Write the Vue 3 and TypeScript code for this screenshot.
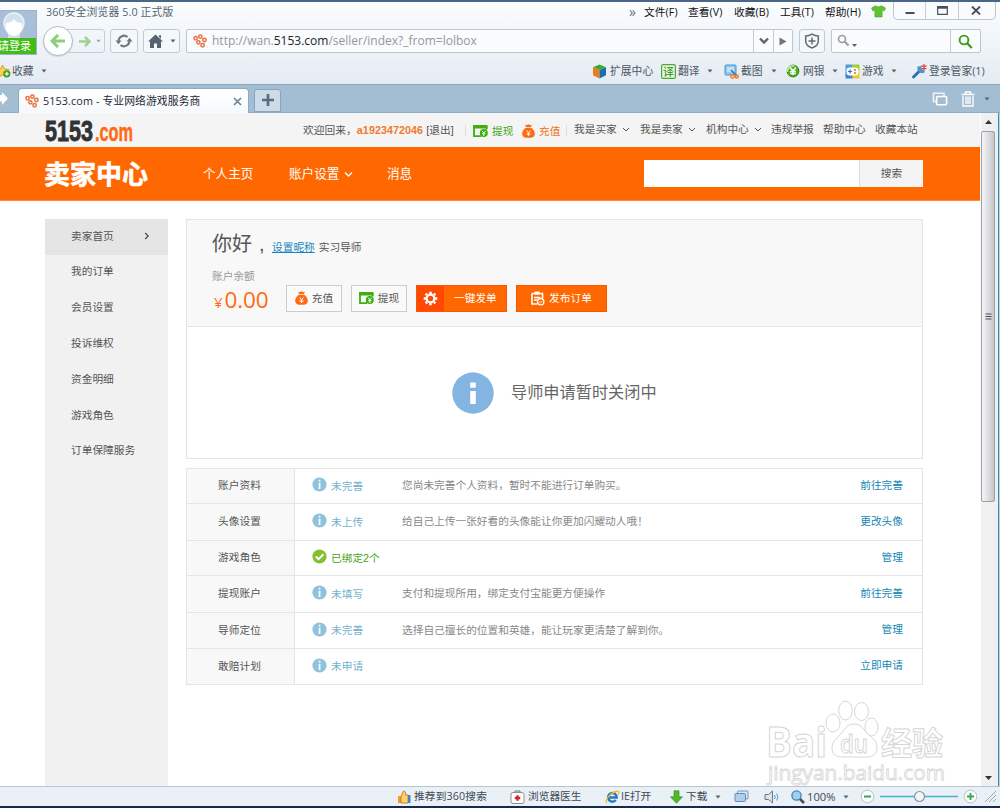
<script setup lang="ts">
interface StatusRow {
  name: string
  state: string
  ok?: boolean
  note: string
  action: string
}

const menus: string[] = ['文件(F)', '查看(V)', '收藏(B)', '工具(T)', '帮助(H)']
const sideItems: string[] = ['卖家首页', '我的订单', '会员设置', '投诉维权', '资金明细', '游戏角色', '订单保障服务']
const rows: StatusRow[] = [
  { name: '账户资料', state: '未完善', note: '您尚未完善个人资料，暂时不能进行订单购买。', action: '前往完善' },
  { name: '头像设置', state: '未上传', note: '给自己上传一张好看的头像能让你更加闪耀动人哦！', action: '更改头像' },
  { name: '游戏角色', state: '已绑定2个', ok: true, note: '', action: '管理' },
  { name: '提现账户', state: '未填写', note: '支付和提现所用，绑定支付宝能更方便操作', action: '前往完善' },
  { name: '导师定位', state: '未完善', note: '选择自己擅长的位置和英雄，能让玩家更清楚了解到你。', action: '管理' },
  { name: '敢赔计划', state: '未申请', note: '', action: '立即申请' },
]
</script>

<template>
  <div class="window">
    <svg class="defs" width="0" height="0" aria-hidden="true">
      <symbol id="flower" viewBox="0 0 14 14">
        <g fill="none" stroke="#e8713f" stroke-width="1.500">
          <circle cx="2.600" cy="4.300" r="1.700" />
          <circle cx="7.400" cy="2.600" r="1.700" />
          <circle cx="11.400" cy="6" r="1.700" />
          <circle cx="5.400" cy="8.300" r="1.600" />
          <circle cx="9.600" cy="11.300" r="1.700" />
        </g>
      </symbol>
      <symbol id="card" viewBox="0 0 15 13">
        <path d="M0 .5h14.500v3.500H0z" fill="#3fae10" />
        <path d="M1 2v9.700h7M13.600 2v3" fill="none" stroke="#3fae10" stroke-width="1.800" />
        <circle cx="10.800" cy="8.600" r="4" fill="#3fae10" />
        <path d="M9 6.300l1.800 2.200 1.800-2.200M10.800 8.500v3M9.200 9.200h3.200" fill="none" stroke="#fff" stroke-width=".9" />
      </symbol>
      <symbol id="bag" viewBox="0 0 13 14">
        <path d="M3.200.6l1.600.6L6.500.3l1.700.9L9.800.6 9 3H4z" fill="#ff6a10" />
        <path d="M4 3.800h5c2 1.200 3.800 3.300 3.800 5.700 0 3-1.800 4.300-4.300 4.300h-4C2 13.800.2 12.500.2 9.500.2 7.100 2 5 4 3.800z" fill="#ff6a10" />
        <path d="M4.500 6.300l2 2.400 2-2.400M6.500 8.700v3.300M4.600 9.100h3.800M4.600 10.600h3.800" fill="none" stroke="#fff" stroke-width=".8" />
      </symbol>
      <symbol id="chev" viewBox="0 0 8 8">
        <path d="M1 3l3 3 3-3" fill="none" stroke="currentColor" />
      </symbol>
      <symbol id="caret" viewBox="0 0 6 4">
        <path d="M.5.5h5L3 3.500z" fill="#56636f" />
      </symbol>
    </svg>

    <header class="browser">
      <div class="account">
        <svg width="36" height="27" viewBox="0 0 36 27">
          <rect width="36" height="27" fill="#a9bfd9" />
          <path d="M4 12C3-2 25-2 24 12c0 5-1 8-4 11v4H8v-4c-3-3-4-6-4-11z" fill="#d4dfec" />
          <circle cx="14" cy="12" r="10" fill="none" stroke="#e9f1f8" stroke-width="1.500" />
          <path d="M6 12c3 0 6-1 8-4 2 3 5 4 8 4 1 8-3 13-8 13S5 20 6 12z" fill="#fff" />
        </svg>
        <span>请登录</span>
      </div>

      <div class="browser-main">
        <div class="title-row">
          <span class="title">360安全浏览器 5.0 正式版</span>
          <span class="more">»</span>
          <span v-for="m in menus" :key="m" class="menu">{{ m }}</span>
          <svg class="shirt" width="15" height="13" viewBox="0 0 15 13">
            <path d="M4.500.8Q7.500 3 10.500.8L14.500 3l-1.400 3-2-.7V12H3.900V5.300l-2 .7L.5 3z" fill="#5fc22f" stroke="#4aa822" stroke-width=".6" />
          </svg>
          <div class="win-buttons">
            <span><svg width="10" height="9" viewBox="0 0 10 9"><path d="M.5 7h9" stroke="#44505e" stroke-width="2" /></svg></span>
            <span><svg width="11" height="9" viewBox="0 0 11 9"><path d="M.7.700h9.600v7.600H.7z" fill="none" stroke="#44505e" stroke-width="1.200" /><path d="M.5 1.700h10" stroke="#44505e" stroke-width="2" /></svg></span>
            <span><svg width="10" height="9" viewBox="0 0 10 9"><path d="M1 .5l8 8M9 .5l-8 8" stroke="#44505e" stroke-width="1.900" /></svg></span>
          </div>
        </div>

        <div class="nav-row">
          <div class="back-fwd">
            <span class="back">
              <svg width="16" height="14" viewBox="0 0 16 14"><path d="M8 1L2 7l6 6M2.500 7H15" fill="none" stroke="#8ccc7c" stroke-width="3" /></svg>
            </span>
            <span class="fwd">
              <svg width="12" height="11" viewBox="0 0 12 11"><path d="M6 1l4.500 4.500L6 10M10 5.500H0" fill="none" stroke="#9bd392" stroke-width="2.500" /></svg>
              <svg width="5" height="4"><use href="#caret" opacity=".6" /></svg>
            </span>
          </div>
          <span class="btn refresh">
            <svg width="18" height="16" viewBox="0 0 18 16">
              <path d="M3.600 8.500A5.400 5.400 0 0 1 12.500 4M14.400 7.500A5.400 5.400 0 0 1 5.500 12" fill="none" stroke="#6a7785" stroke-width="2" />
              <path d="M.5 7.500h6l-3 3.700zM11.500 8.500h6l-3-3.700z" fill="#6a7785" />
            </svg>
          </span>
          <span class="btn home">
            <svg width="15" height="14" viewBox="0 0 15 14"><path d="M7.500.5L15 7.500h-2V14H9V9.500H6V14H2V7.500H0zM11 1.300h2v3.500l-2-2z" fill="#56626f" /></svg>
            <svg width="6" height="4"><use href="#caret" /></svg>
          </span>
          <div class="address">
            <svg width="14" height="14"><use href="#flower" /></svg>
            <span class="url">http://wan.<b>5153.com</b>/seller/index?_from=lolbox</span>
            <i><svg width="12" height="8" viewBox="0 0 12 8"><path d="M2 1.500l4 4 4-4" fill="none" stroke="#5a6673" stroke-width="2.400" /></svg></i>
            <i><svg width="8" height="9" viewBox="0 0 8 9"><path d="M.5.500l7 4-7 4z" fill="#6a7683" /></svg></i>
          </div>
          <span class="btn shield">
            <svg width="16" height="16" viewBox="0 0 16 16"><path d="M8 1.200Q11 3 14.300 3v5c0 3.500-3.500 6-6.300 7-2.800-1-6.300-3.500-6.300-7V3Q5 3 8 1.200z" fill="none" stroke="#5f6c78" stroke-width="1.500" /><path d="M4.500 8h7M8 4.500v7" stroke="#5f6c78" stroke-width="1.500" /></svg>
          </span>
          <div class="search">
            <svg width="22" height="14" viewBox="0 0 22 14"><circle cx="5" cy="5" r="3.500" fill="none" stroke="#97a0aa" stroke-width="1.700" /><path d="M7.500 7.500l4 4" stroke="#97a0aa" stroke-width="2.200" /><path d="M15 10h5l-2.500 3z" fill="#56636f" /></svg>
            <i><svg width="15" height="15" viewBox="0 0 15 15"><circle cx="6" cy="6" r="4.400" fill="none" stroke="#3f9a1c" stroke-width="1.900" /><path d="M9 9l4.800 5" stroke="#3f9a1c" stroke-width="2.300" /></svg></i>
          </div>
        </div>
      </div>

      <div class="bookmarks">
        <svg width="11" height="14" viewBox="0 0 11 14">
          <path d="M2.500 1L4.500 5 9 5.500 6 8.500l1 4.500-4.500-2.200L-1 13V5l2-.5z" fill="#ffd04a" stroke="#d89a2a" />
          <circle cx="6.800" cy="9.800" r="3.600" fill="#3f9b22" /><path d="M4.800 9.800h4M6.800 7.800v4" stroke="#fff" stroke-width="1.300" />
        </svg>
        <span>收藏</span>
        <svg width="6" height="4"><use href="#caret" /></svg>

        <svg width="15" height="15" viewBox="0 0 15 15"><path d="M7.500.5L14 3.200 7.500 6 1 3.200z" fill="#37ad2c" /><path d="M1 3.200L7.500 6v8.500L1 11.300z" fill="#ec7b1c" /><path d="M14 3.200L7.500 6v8.500L14 11.300z" fill="#1d6ab5" /></svg>
        <span>扩展中心</span>
        <svg width="15" height="15" viewBox="0 0 15 15"><rect x=".6" y=".6" width="13.800" height="13.800" rx="1.500" fill="#e6f6dc" stroke="#4fa835" stroke-width="1.200" /><text x="2" y="11.700" font-size="11" fill="#2f8a1c">译</text></svg>
        <span>翻译</span>
        <svg width="6" height="4"><use href="#caret" /></svg>
        <svg width="15" height="15" viewBox="0 0 15 15"><rect x="1" y="1" width="11" height="10" rx="1" fill="#8cc5ee" stroke="#4a93cd" /><rect x="3" y="3" width="7" height="5" fill="#c2e3fa" /><path d="M7 6l6 6" stroke="#336fae" stroke-width="1.500" /><circle cx="8.500" cy="12.500" r="1.700" fill="none" stroke="#ef7e25" stroke-width="1.400" /><circle cx="12.800" cy="12.500" r="1.500" fill="none" stroke="#ef7e25" stroke-width="1.400" /></svg>
        <span>截图</span>
        <svg width="6" height="4"><use href="#caret" /></svg>
        <svg width="14" height="14" viewBox="0 0 14 14"><circle cx="7" cy="7" r="5.900" fill="#54ad25" stroke="#2d8410" /><path d="M1.500 8a5.500 5.500 0 0 1 7-6" fill="none" stroke="#c6eda0" stroke-width="1.500" /><path d="M4 3.500l3 3.300 3-3.300M7 7v4M4.200 7.400h5.600M4.200 9.400h5.600" fill="none" stroke="#fff" stroke-width="1.500" /></svg>
        <span>网银</span>
        <svg width="6" height="4"><use href="#caret" /></svg>
        <svg width="15" height="15" viewBox="0 0 15 15"><path d="M.5.500h7v7h-7z" fill="#4a9edb" /><path d="M7.500.500h7v7h-7z" fill="#a7cc2b" /><path d="M7.500 7.500h7v7h-7z" fill="#f4c62d" /><path d="M.5 7.500h7v7h-7z" fill="#3c84cc" /><rect x="1.500" y="3.500" width="12" height="8" rx="3" fill="#fff" /><path d="M3 7.500h4M5 5.500v4" stroke="#2a74bb" stroke-width="1.200" /><path d="M9 6h2M9 9h2" stroke="#cf732a" stroke-width="1.500" /></svg>
        <span>游戏</span>
        <svg width="6" height="4"><use href="#caret" /></svg>
        <svg class="wrench" width="15" height="15" viewBox="0 0 15 15"><path d="M1.500 13L8 6.500" stroke="#296fae" stroke-width="2.800" stroke-linecap="round" /><path d="M5.500 2.500v4L8.500 9H12L13 6.500 9.500 5V2z" fill="#4f93cc" /><path d="M12 0v6M9.300 1.500l5.400 3M9.300 4.500l5.400-3" stroke="#e5453a" stroke-width="1.300" /></svg>
        <span class="steward">登录管家(1)</span>
      </div>
    </header>

    <div class="tabs">
      <svg width="18" height="24" viewBox="0 0 18 24"><path d="M0 8h2V5l6 6.500L2 18v-3.500H0z" fill="#fff" /></svg>
      <div class="tab">
        <svg width="14" height="14"><use href="#flower" /></svg>
        <span>5153.com - 专业网络游戏服务商</span>
        <svg width="9" height="9" viewBox="0 0 9 9"><path d="M1 1l7 7M8 1L1 8" stroke="#6a8198" stroke-width="1.600" /></svg>
      </div>
      <div class="new-tab">
        <svg width="12" height="12" viewBox="0 0 12 12"><path d="M0 6h12M6 0v12" stroke="#5b6b7c" stroke-width="2.700" /></svg>
      </div>
      <svg class="restore" width="16" height="14" viewBox="0 0 16 14"><path d="M4 9.500H1.500V1.200h10.500v2.500" fill="none" stroke="#edf4f9" stroke-width="1.600" /><rect x="4.600" y="4.500" width="10" height="8.200" rx="1" fill="none" stroke="#fff" stroke-width="1.600" /></svg>
      <svg class="bin" width="14" height="16" viewBox="0 0 14 16"><path d="M.5 3.500h13M4.500 3V1h5v2" fill="none" stroke="#fff" stroke-width="1.700" /><path d="M2 5v10h10V5M5 5.500V13M7 5.500V13M9 5.500V13" fill="none" stroke="#fff" stroke-width="1.300" /></svg>
      <svg width="6" height="4"><use href="#caret" /></svg>
    </div>

    <div class="viewport">
      <main class="page">
        <div class="topbar">
          <svg class="logo" width="110" height="34" viewBox="0 0 110 34">
            <text x="1" y="27.500" font-size="29" font-weight="700" fill="#303236" stroke="#303236" stroke-width=".8" textLength="48" lengthAdjust="spacingAndGlyphs">5153</text>
            <text x="51" y="27.500" font-size="25" font-weight="700" fill="#ff6a10" stroke="#ff6a10" stroke-width=".4" textLength="38" lengthAdjust="spacingAndGlyphs">.com</text>
          </svg>
          <span class="welcome">欢迎回来，<b>a1923472046</b> [退出]</span>
          <i></i>
          <span class="with-icon green"><svg width="15" height="14"><use href="#card" /></svg>提现</span>
          <span class="with-icon orange"><svg width="13" height="14"><use href="#bag" /></svg>充值</span>
          <i></i>
          <span class="drop">我是买家<svg width="8" height="8"><use href="#chev" /></svg></span>
          <span class="drop">我是卖家<svg width="8" height="8"><use href="#chev" /></svg></span>
          <span class="drop">机构中心<svg width="8" height="8"><use href="#chev" /></svg></span>
          <span class="raised">违规举报</span>
          <span class="raised">帮助中心</span>
          <span class="raised">收藏本站</span>
        </div>

        <nav class="mainnav">
          <h1>卖家中心</h1>
          <span>个人主页</span>
          <span class="drop">账户设置<svg width="9" height="8" viewBox="0 0 9 8"><path d="M1 2.500l3.500 3.500L8 2.500" fill="none" stroke="#fff" stroke-width="1.400" /></svg></span>
          <span>消息</span>
          <div class="find"><div class="field"></div><div class="find-btn">搜索</div></div>
        </nav>

        <div class="body">
          <aside class="side">
            <div v-for="(s, i) in sideItems" :key="s" class="side-item" :class="{ active: i === 0 }">
              <span>{{ s }}</span>
              <svg v-if="i === 0" width="6" height="8" viewBox="0 0 6 8"><path d="M1.200 1l3 3-3 3" fill="none" stroke="#444" stroke-width="1.100" /></svg>
            </div>
          </aside>

          <section class="content">
            <div class="card">
              <div class="summary">
                <div class="hello"><strong>你好</strong><em>,</em><a>设置昵称</a><span>实习导师</span></div>
                <div class="label">账户余额</div>
                <div class="money">
                  <div class="amount"><small>¥</small>0.00</div>
                  <div class="plain"><svg width="13" height="14"><use href="#bag" /></svg>充值</div>
                  <div class="plain"><svg width="15" height="14"><use href="#card" /></svg>提现</div>
                  <div class="solid quick">
                    <span class="gear"><svg width="15" height="15" viewBox="-7.500 -7.500 15 15"><circle r="3.900" fill="none" stroke="#fff" stroke-width="2.300" /><path d="M0-6.800V-4.500M0 4.500V6.800M-6.800 0H-4.500M4.500 0H6.800M-4.800-4.800l1.300 1.300M3.500 3.500l1.300 1.300M-4.800 4.800l1.300-1.300M3.500-3.500l1.300-1.300" stroke="#fff" stroke-width="2.500" /></svg></span>
                    <span class="quick-text">一键发单</span>
                  </div>
                  <div class="solid publish">
                    <svg width="14" height="15" viewBox="0 0 14 15"><path d="M1 2.500h10.500V7M1 2.500V13h5" fill="none" stroke="#fff" stroke-width="1.600" /><path d="M3.500.5h5v3.200h-5z" fill="#fff" /><path d="M3 6.500h6M3 9h3" stroke="#fff" stroke-width="1.400" /><circle cx="9.700" cy="10.700" r="3.200" fill="none" stroke="#fff" stroke-width="1.300" /><path d="M8.300 10.700l1.200 1.100 1.900-2" fill="none" stroke="#fff" /></svg>
                    发布订单
                  </div>
                </div>
              </div>
              <div class="notice">
                <svg width="42" height="42" viewBox="0 0 42 42"><circle cx="21" cy="21" r="20.700" fill="#83b4e2" /><path d="M18.200 10.500h5.600v5.200h-5.600zM18.200 19h5.600v13h-5.600z" fill="#fff" /></svg>
                <span>导师申请暂时关闭中</span>
              </div>
            </div>

            <div class="table">
              <div v-for="r in rows" :key="r.name" class="row">
                <div class="name">{{ r.name }}</div>
                <svg width="15" height="15" viewBox="0 0 15 15">
                  <template v-if="r.ok"><circle cx="7.500" cy="7.500" r="7.100" fill="#86c02c" /><path d="M3.800 7.500l2.800 2.700 4.800-4.900" fill="none" stroke="#fff" stroke-width="2" /></template>
                  <template v-else><circle cx="7.500" cy="7.500" r="7.100" fill="#8fc2dc" /><path d="M6.700 2.800h1.700v1.800H6.700zM6.700 5.800h1.700v6.200H6.700z" fill="#fff" /></template>
                </svg>
                <span class="state" :class="{ ok: r.ok }">{{ r.state }}</span>
                <span class="note">{{ r.note }}</span>
                <a>{{ r.action }}</a>
              </div>
            </div>
          </section>
        </div>
      </main>

      <div class="scroll">
        <svg width="14" height="16" viewBox="0 0 14 16"><path d="M4 11h7L7.500 7z" fill="#333" /></svg>
        <div class="thumb"><svg width="7" height="8" viewBox="0 0 7 8"><path d="M.5 1h6M.5 3.500h6M.5 6h6" stroke="#4b4f55" /></svg></div>
        <svg class="down" width="14" height="16" viewBox="0 0 14 16"><path d="M4 6h7L7.500 10z" fill="#333" /></svg>
      </div>
      <div class="edge"></div>

      <svg class="watermark" width="190" height="95" viewBox="0 0 190 95">
        <g fill="#fff" fill-opacity=".6" stroke="#d6d6d6" stroke-width="1">
          <ellipse cx="73" cy="28" rx="7" ry="9" />
          <ellipse cx="85.500" cy="15.500" rx="6.800" ry="9.500" />
          <ellipse cx="101.500" cy="16.500" rx="7" ry="9" />
          <ellipse cx="111.500" cy="32" rx="6.500" ry="9" />
          <path d="M94 29c8 0 9 6 15 11 5 4 9 8 8 14-1 7-6 8-11 8H83c-6 0-11-2-11-9 0-6 4-9 8-13 5-5 6-11 14-11z" />
          <text x="6" y="61.500" font-size="41" font-weight="700" textLength="61" lengthAdjust="spacingAndGlyphs">Bai</text>
          <text x="80" y="57.500" font-size="25" font-weight="600" textLength="28" lengthAdjust="spacingAndGlyphs">du</text>
          <text x="121" y="60" font-size="32" font-weight="700" textLength="62" lengthAdjust="spacingAndGlyphs">经验</text>
          <text x="8" y="84.500" font-size="19.500" stroke-width=".8" textLength="177" lengthAdjust="spacingAndGlyphs">jingyan.baidu.com</text>
        </g>
      </svg>
    </div>

    <footer class="status">
      <svg width="14" height="14" viewBox="0 0 14 14"><rect x="1" y="6" width="3" height="7" fill="#f09b2c" /><path d="M4 6.500L6.500 1Q9 .8 8.500 5H11v8H4z" fill="#ffd36b" stroke="#cf8420" /><rect x="11" y="5" width="2.500" height="8" fill="#3e87c7" /></svg>
      <span class="recommend">推荐到360搜索</span>
      <svg width="15" height="14" viewBox="0 0 15 14"><rect x="1" y="2.500" width="13" height="11" rx="2" fill="#fff" stroke="#8c8f94" /><path d="M5 2V1h5v1" fill="none" stroke="#777" /><path d="M4.800 8h5.400M7.500 5.300v5.400" stroke="#d8202b" stroke-width="2.300" /></svg>
      <span>浏览器医生</span>
      <svg width="15" height="14" viewBox="0 0 15 14"><path d="M3.500 7.500h8.200A4.300 4.300 0 1 0 10.800 10" fill="none" stroke="#2779c9" stroke-width="2.500" /><path d="M2 13C-1 11 5 3 11 1.500c3-.8 3.500 1 2.300 3" fill="none" stroke="#f0b52e" stroke-width="1.300" /></svg>
      <span>IE打开</span>
      <svg width="13" height="14" viewBox="0 0 13 14"><path d="M4 .8h5v6h3.500L6.500 13.300.5 6.800H4z" fill="#51b82c" stroke="#38901a" stroke-width=".7" /></svg>
      <span>下载</span>
      <svg width="6" height="4"><use href="#caret" /></svg>
      <svg width="15" height="13" viewBox="0 0 15 13"><rect x="3.500" y="1" width="10.500" height="8" rx="1" fill="#d6e7f6" stroke="#7697b8" /><rect x="1" y="3.500" width="10.500" height="8" rx="1" fill="#aecfeb" stroke="#688cb1" /></svg>
      <svg width="16" height="14" viewBox="0 0 16 14"><path d="M1 4.500h3.500L8.500 1v12l-4-3.500H1z" fill="#dce3ea" stroke="#6b7784" /><path d="M10.500 5q1.500 2 0 4M12.700 3.500q2.300 3.500 0 7" fill="none" stroke="#5b9bd0" /></svg>
      <svg width="14" height="14" viewBox="0 0 14 14"><circle cx="5.500" cy="5.500" r="4.600" fill="#9bd0f3" stroke="#4d7fae" stroke-width="1.300" /><path d="M9 9l4 4" stroke="#46525e" stroke-width="2.600" /></svg>
      <span class="zoom">100%</span>
      <svg width="6" height="4"><use href="#caret" /></svg>
      <svg width="117" height="15" viewBox="0 0 117 15">
        <g fill="#fbfdfd" stroke="#b5c4cc"><circle cx="7.500" cy="7.500" r="6.300" /><circle cx="110.500" cy="7.500" r="6.300" /></g>
        <path d="M20 7.500h78" stroke="#43b1d3" stroke-width="1.500" />
        <circle cx="59.500" cy="7.500" r="5" fill="#f2f5f7" stroke="#8a98a4" stroke-width="1.200" />
        <path d="M4 7.500h7M107 7.500h7M110.500 4v7" stroke="#35a853" stroke-width="1.800" />
      </svg>
      <svg width="13" height="13" viewBox="0 0 13 13"><path d="M1 12L12 1M5 12l7-7M9 12l3-3" stroke="#9aa8b5" /></svg>
    </footer>
    <div class="desktop"></div>
  </div>
</template>

<style>
body { margin: 0; overflow: hidden; }
</style>

<style scoped>
.window {
  width: 1000px; height: 808px; display: flex; flex-direction: column; overflow: hidden;
  font-family: "Open Sans", "Noto Sans CJK SC", sans-serif; font-size: 10.800px; line-height: 1;
  white-space: nowrap; background: #fff; color: #4a545e; box-sizing: border-box;
}
svg { display: block; flex: none; }
i, em { font-style: normal; }
.defs { position: absolute; }

.browser {
  height: 84px; flex: none; box-sizing: border-box; border-top: 2px solid #4a6685;
  background: linear-gradient(#fbfdfe, #f2f6fa 40%, #e4ebf2); display: grid;
  grid-template-columns: 43px 1fr; grid-template-rows: 55px 27px;
}
.account { width: 37px; height: 45px; margin-top: 8px; overflow: hidden; background: #42bd17; color: #fff; box-sizing: border-box; border: 1px solid #9fb3c6; border-left: 0; }
.account span { display: block; font-size: 11px; line-height: 16px; margin-left: -2px; }
.title-row { display: grid; height: 20px; align-items: center; grid-template-columns: 586px 15px 44px 46px 46px 45px 46px 22px 103px; }
.title { padding-left: 3px; font-size: 10.800px; color: #566370; letter-spacing: .1px; }
.more { font-size: 14px; color: #66717b; }
.menu { color: #111; font-size: 10.700px; letter-spacing: .1px; }
.shirt { margin-top: -1px; }
.win-buttons { display: grid; grid-template-columns: 31px 33px 39px; height: 18px; align-self: start; box-sizing: border-box; border: 1px solid #b9c5d0; border-top: 0; border-radius: 0 0 5px 5px; width: 103px; background: #f9fbfc; }
.win-buttons span { display: flex; align-items: center; justify-content: center; border-left: 1px solid #c5cfd9; }
.win-buttons span:first-child { border-left: 0; }
.win-buttons span:last-child { padding-right: 4px; }
.nav-row { display: flex; align-items: center; height: 38px; }
.back-fwd { display: flex; align-items: center; width: 62px; margin-right: 5px; }
.back { width: 30px; height: 30px; box-sizing: border-box; border: 1px solid #b3bcc5; border-radius: 50%; background: #fdfefe; display: flex; align-items: center; justify-content: center; position: relative; z-index: 1; box-shadow: 0 1px 1px #ccd3da; }
.fwd { margin-left: -6px; width: 38px; height: 24px; box-sizing: border-box; border: 1px solid #c3cdd7; border-radius: 0 3px 3px 0; display: flex; align-items: center; gap: 5px; padding-left: 11px; }
.btn { height: 24px; box-sizing: border-box; border: 1px solid #bfcad5; border-radius: 3px; display: flex; align-items: center; justify-content: center; background: #f5f8fb; }
.refresh { width: 28px; margin-right: 5px; }
.home { width: 37px; gap: 7px; margin-right: 6px; }
.address { width: 607px; height: 24px; box-sizing: border-box; border: 1px solid #bac6d1; border-radius: 2px; display: grid; grid-template-columns: 25px 541px 20px 19px; align-items: center; background: #f9fbfd; }
.address > svg { margin-left: 6px; }
.url { color: #9299a0; font-size: 12px; }
.url b { font-weight: 400; color: #20262c; }
.address i, .search i { border-left: 1px solid #bfcbd6; height: 22px; display: flex; align-items: center; justify-content: center; box-sizing: border-box; }
.shield { width: 26px; margin: 0 6px; }
.search { width: 150px; height: 24px; box-sizing: border-box; border: 1px solid #bac6d1; border-radius: 2px; display: grid; grid-template-columns: 118px 30px; align-items: center; background: #f9fbfd; }
.search > svg { margin-left: 5px; }
.bookmarks { grid-column: 1 / 3; display: grid; align-items: center; color: #4b5763; font-size: 10.800px; padding-top: 1px;
  grid-template-columns: 12px 29px 551px 18px 51px 17px 29px 17px 17px 30px 15px 17px 29px 13px 17px 29px 17px 17px 60px; }
.wrench { margin-left: 4px; }
.steward { margin-left: 4px; }

.tabs { height: 29px; flex: none; box-sizing: border-box; border-top: 1px solid #8ba6bd; border-bottom: 1px solid #8facc4; background: #a3bdd2; display: flex; align-items: center; }
.tab { width: 231px; height: 26px; margin-top: 3px; margin-bottom: -1px; box-sizing: border-box; border: 1px solid #8eabc3; border-bottom: 0; border-radius: 4px 4px 0 0; background: linear-gradient(#fff, #f5f9fb); display: grid; grid-template-columns: 18px 190px 9px; align-items: center; padding-left: 6px; color: #1d2a36; font-size: 10.800px; letter-spacing: .1px; }
.new-tab { width: 27px; height: 23px; margin: 3px 0 0 5px; box-sizing: border-box; border: 1px solid #87a5be; border-radius: 3px 3px 0 0; background: #ccdbe8; display: flex; align-items: center; justify-content: center; }
.restore { margin-left: 651px; margin-right: 13px; }
.bin { margin-right: 9px; }

.viewport { position: relative; height: 673px; flex: none; display: grid; grid-template-columns: 981px 14px 5px; }
.page { height: 673px; overflow: hidden; font-family: "Liberation Sans", "Noto Sans CJK SC", sans-serif; font-size: 10.700px; color: #555; }
.topbar { height: 34px; width: 980px; background: #f4f4f4; display: grid; align-items: center; padding-left: 44px; box-sizing: border-box;
  grid-template-columns: 259px 162px 8px 49px 44px 8px 66px 66px 65px 52px 52px 50px; }
.logo { font-family: "Liberation Sans", sans-serif; }
.welcome { letter-spacing: .08px; }
.welcome b { color: #f07a2c; }
.topbar i { height: 11px; border-left: 1px solid #ddd; }
.with-icon { display: flex; align-items: center; gap: 4px; padding-top: 2px; }
.green { color: #3fa518; }
.orange { color: #f0701a; }
.drop { display: flex; align-items: center; gap: 5px; }
.topbar .drop, .raised { padding-bottom: 2px; }
.mainnav { height: 53.500px; width: 980px; box-sizing: border-box; background: #ff6700; color: #fff; display: grid; grid-template-columns: 159px 86px 98px 257px 279px; padding-left: 44px; align-items: center; font-size: 12.600px; border-bottom: 1px solid #ff8a3c; }
.mainnav > span { padding-top: 2px; }
.mainnav h1 { margin: 0; padding-top: 4px; font-size: 26px; font-weight: 700; -webkit-text-stroke: .6px #fff; }
.find { display: grid; grid-template-columns: 215px 64px; height: 27px; color: #555; font-size: 10.700px; }
.field { background: #fff; }
.find-btn { background: #f4f4f4; border-left: 1px solid #ddd; display: flex; align-items: center; justify-content: center; box-sizing: border-box; }

.body { display: grid; grid-template-columns: 122.500px 737px; column-gap: 18.500px; padding-left: 45px; margin-top: 18.500px; height: 567px; }
.side { background: #f1f1f1; }
.side-item { height: 35.800px; display: flex; align-items: center; padding: 0 18px 2px 26px; box-sizing: border-box; justify-content: space-between; color: #555; }
.side-item.active { background: #e5e5e5; }
.content { display: flex; flex-direction: column; gap: 9px; }
.card { height: 240px; box-sizing: border-box; border: 1px solid #e5e5e5; }
.summary { height: 107px; box-sizing: border-box; background: #f8f8f8; border-bottom: 1px solid #e5e5e5; padding: 14px 0 0 25px; }
.hello { display: flex; align-items: baseline; height: 37px; }
.hello strong { font-size: 20px; font-weight: 400; color: #555; }
.hello em { font-size: 20px; width: 13px; margin-left: 7px; }
.hello a { color: #1687bd; text-decoration: underline; margin-right: 4px; }
.label { color: #999; height: 14px; }
.money { display: flex; align-items: center; height: 26px; }
.amount { width: 74px; font-family: "Open Sans", sans-serif; color: #ff6a10; font-size: 22.500px; letter-spacing: -.1px; box-sizing: border-box; padding: 5px 0 0 2px; }
.amount small { font-size: 15px; margin-right: 2px; }
.plain { width: 56px; height: 27px; box-sizing: border-box; border: 1px solid #ccc; display: flex; align-items: center; justify-content: center; gap: 4px; margin-right: 9px; background: #fafafa; }
.solid { height: 27px; width: 91px; box-sizing: border-box; border: 1px solid #fb5500; background: #ff6700; color: #fff; display: flex; align-items: center; margin-right: 9px; }
.gear { width: 27px; height: 25px; background: #ff4a05; display: flex; align-items: center; justify-content: center; }
.quick-text { margin-left: 10px; }
.publish { gap: 4px; justify-content: center; }
.notice { height: 131px; display: grid; grid-template-columns: 59px 200px; align-items: center; padding-left: 265px; font-size: 16.200px; color: #666; }
.table { height: 217px; box-sizing: border-box; border: 1px solid #e5e5e5; display: grid; grid-template-rows: 35px 37px 35px 37px 36px 35px; }
.row { display: grid; grid-template-columns: 108px 18px 71px 459px 60px; align-items: center; border-bottom: 1px solid #e5e5e5; }
.row:last-child { border-bottom: 0; }
.row > svg { margin-left: 17px; margin-top: -3px; }
.name { height: 100%; background: #f8f8f8; border-right: 1px solid #e5e5e5; display: flex; align-items: center; justify-content: center; color: #555; box-sizing: border-box; padding: 0 2px 1px 0; }
.state { color: #73b3cd; padding-left: 18px; }
.state.ok { color: #48a216; }
.note { color: #888; padding: 0 0 1px 18px; }
.row a { color: #1687b5; text-align: right; padding-bottom: 2px; }

.scroll { height: 673px; background: #f0f0f1; display: flex; flex-direction: column; }
.thumb { height: 371px; margin-top: 2px; box-sizing: border-box; border: 1px solid #9da0a5; border-radius: 2px; background: linear-gradient(90deg, #f5f5f6, #dcdde0 55%, #c3c5ca); display: flex; align-items: center; justify-content: center; }
.down { margin-top: auto; }
.edge { background: linear-gradient(90deg, #e9f1f8 0 60%, #4f8699 60% 80%, #b8d4e2 80%); }
.watermark { position: absolute; left: 760px; top: 582px; font-family: "Open Sans", "Noto Sans CJK SC", sans-serif; }

.status { height: 20px; flex: none; box-sizing: border-box; border-top: 1px solid #b8c4cf; background: #e9f0f6; display: grid; align-items: center; padding-left: 397px; color: #3f4a55; font-size: 10.700px;
  grid-template-columns: 17px 96px 18px 77px 16px 49px 16px 29px 19px 30px 27px 16px 36px 17px 124px 14px; }
.recommend { letter-spacing: .15px; }
.zoom { font-size: 11.200px; }
.desktop { height: 2px; background: #17294c; }
</style>
